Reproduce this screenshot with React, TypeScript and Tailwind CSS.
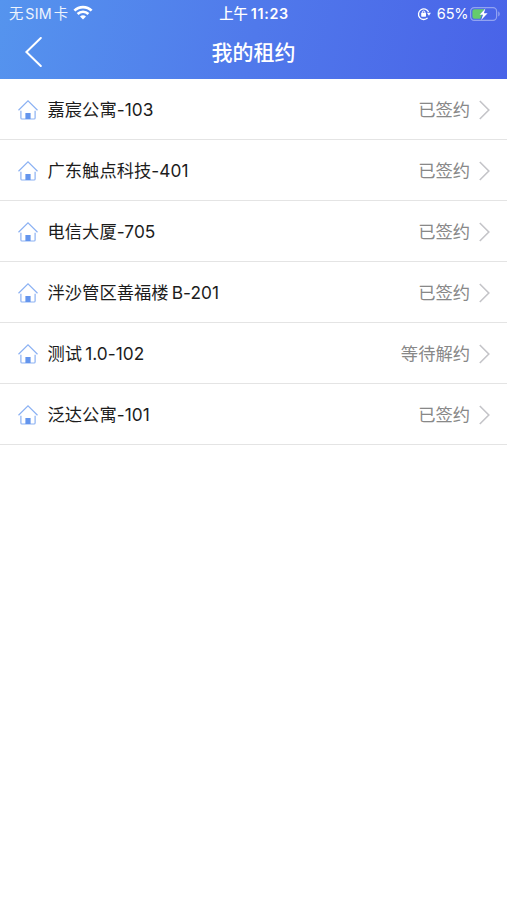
const leases = [
  { name: "嘉宸公寓-103", status: "已签约" },
  { name: "广东触点科技-401", status: "已签约" },
  { name: "电信大厦-705", status: "已签约" },
  { name: "泮沙管区善福楼", suffix: "B-201", status: "已签约" },
  { name: "测试", suffix: "1.0-102", status: "等待解约" },
  { name: "泛达公寓-101", status: "已签约" },
]

function WifiIcon() {
  return (
    <svg width="20" height="15" viewBox="0 0 20 15" fill="none" stroke="white" strokeWidth="2.7">
      <path d="M1.4 5.6a12.2 12.2 0 0 1 17.2 0" />
      <path d="M4.6 9a7.6 7.6 0 0 1 10.8 0" />
      <path d="M10 14.6 7 11.6a4.3 4.3 0 0 1 6 0Z" fill="white" stroke="none" />
    </svg>
  )
}

function RotationLockIcon() {
  return (
    <svg width="14" height="14" viewBox="0 0 14 14" fill="none" stroke="white" strokeWidth="1.3">
      <path d="M10.6 10.9A5.3 5.3 0 1 1 11.6 5" />
      <path d="M9.9 5.8h4L12 8.8Z" fill="white" stroke="none" />
      <path d="M5.3 6.4V5.3a1.3 1.3 0 0 1 2.6 0v1.1" strokeWidth="1" />
      <rect x="4.2" y="5.8" width="4.8" height="3.9" rx="0.6" fill="white" stroke="none" />
    </svg>
  )
}

function BatteryIcon() {
  return (
    <svg width="31" height="14" viewBox="0 0 31 14" fill="none">
      <rect x="0.6" y="0.6" width="26" height="12.8" rx="3.6" stroke="white" strokeOpacity="0.4" strokeWidth="1.2" />
      <path d="M28.3 4.6c1.8.6 1.8 4.2 0 4.8Z" fill="white" fillOpacity="0.45" />
      <path d="M4.3 2.3h10.4l-5 5.2h2.3l-1.7 4.2H4.3a1.9 1.9 0 0 1-1.9-1.9V4.2a1.9 1.9 0 0 1 1.9-1.9Z" fill="#65cb6c" />
      <path d="m15.4 1.4-5.8 6.3h3.4l-1.8 5.2 6.4-6.7h-3.7Z" fill="white" />
    </svg>
  )
}

function HouseIcon() {
  return (
    <svg width="20" height="20" viewBox="0 0 20 20" fill="none" stroke="#8bb1f3" strokeWidth="1.2">
      <path d="M0.5 10.2 10 0.9l9.5 9.3" />
      <path d="M2.9 10.8v7.1c0 .7.4 1.1 1.1 1.1h12c.7 0 1.1-.4 1.1-1.1v-7.1" />
      <rect x="7.4" y="13" width="5.2" height="6" fill="#6495ed" stroke="none" />
    </svg>
  )
}

function Header() {
  return (
    <header className="h-[79px] bg-[linear-gradient(102deg,#5594ee_0%,#5079eb_50%,#4963e8_100%)] text-white">
      {/* Status bar */}
      <div className="grid h-[27px] grid-cols-3 items-center pl-[9px] pr-[6px] text-[14.3px]">
        <div className="flex items-center text-white/90">
          <span>无</span>
          <span className="ml-[2px] tracking-[0.2px]">SIM</span>
          <span className="ml-[2px]">卡</span>
          <span className="ml-[5px] -mt-[2px]">
            <WifiIcon />
          </span>
        </div>
        <div className="flex items-center justify-center gap-[3px] pr-[2px] font-medium">
          <span>上午</span>
          <span className="font-semibold tracking-[0.7px]">11:23</span>
        </div>
        <div className="flex items-center justify-end">
          <RotationLockIcon />
          <span className="ml-[6px] mr-[1.5px] text-[14.5px] tracking-[-0.1px]">65%</span>
          <BatteryIcon />
        </div>
      </div>

      {/* Title bar */}
      <div className="grid h-[50px] grid-cols-[60px_1fr_60px] items-center">
        <button className="pl-6" aria-label="返回">
          <svg width="18" height="30" viewBox="0 0 18 30" fill="none" stroke="white" strokeWidth="2">
            <path d="M16.8 1 2.4 15l14.4 14" strokeLinecap="round" />
          </svg>
        </button>
        <h1 className="pt-[2px] text-center text-[21px] font-medium">我的租约</h1>
      </div>
    </header>
  )
}

export default function App() {
  return (
    <div className="min-h-screen bg-white font-[Inter,'Noto_Sans_CJK_SC',sans-serif]">
      <Header />
      <ul>
        {leases.map((lease) => (
          <li
            key={lease.name}
            className="flex h-[61px] items-center border-b border-[#e4e4e4] pl-[18px] pr-[17px] pt-[2px] text-[17.3px]"
          >
            <HouseIcon />
            <span className="ml-[9.5px] tracking-[0.03px] text-[#1c1c1c]">
              {lease.name}
              {lease.suffix && <span className="ml-[3px]">{lease.suffix}</span>}
            </span>
            <span className="ml-auto text-[#888]">{lease.status}</span>
            <svg className="ml-[9px]" width="11" height="20" viewBox="0 0 11 20" fill="none" stroke="#c4c4c8" strokeWidth="1.6">
              <path d="M0.8 1 9.8 10l-9 9" />
            </svg>
          </li>
        ))}
      </ul>
    </div>
  )
}
